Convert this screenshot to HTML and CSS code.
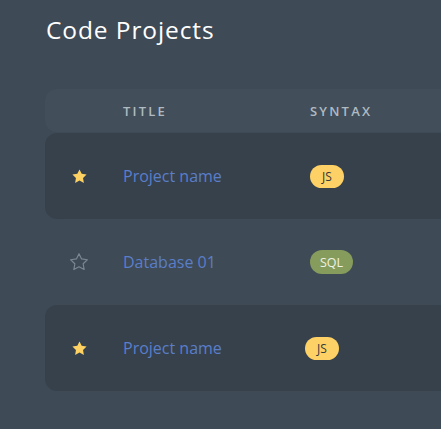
FILE: index.html
```html
<!DOCTYPE html>
<html>
<head>
<meta charset="utf-8">
<link rel="stylesheet" href="styles.css">
</head>
<body>
<div class="page">
  <h1 class="title">Code Projects</h1>
  <div class="table">
    <div class="row head">
      <div class="cell"></div>
      <div class="cell">TITLE</div>
      <div class="cell">SYNTAX</div>
    </div>
    <div class="row dark">
      <div class="cell star-cell">
        <svg class="star" viewBox="0 0 24 24"><path d="M12 2l3.09 6.26L22 9.27l-5 4.87 1.18 6.88L12 17.77l-6.18 3.25L7 14.14 2 9.27l6.91-1.01L12 2z"/></svg>
      </div>
      <div class="cell name">Project name</div>
      <div class="cell"><span class="badge js">JS</span></div>
    </div>
    <div class="row">
      <div class="cell star-cell">
        <svg class="star outline" viewBox="0 0 24 24"><path d="M12 2l3.09 6.26L22 9.27l-5 4.87 1.18 6.88L12 17.77l-6.18 3.25L7 14.14 2 9.27l6.91-1.01L12 2z"/></svg>
      </div>
      <div class="cell name">Database 01</div>
      <div class="cell"><span class="badge sql">SQL</span></div>
    </div>
    <div class="row dark">
      <div class="cell star-cell">
        <svg class="star" viewBox="0 0 24 24"><path d="M12 2l3.09 6.26L22 9.27l-5 4.87 1.18 6.88L12 17.77l-6.18 3.25L7 14.14 2 9.27l6.91-1.01L12 2z"/></svg>
      </div>
      <div class="cell name">Project name</div>
      <div class="cell"><span class="badge js shifted">JS</span></div>
    </div>
  </div>
</div>
</body>
</html>
```

FILE: styles.css
```css
html, body {
  margin: 0;
  padding: 0;
  overflow: hidden;
  background: #3e4a56;
}
body {
  font-family: "Open Sans", "Noto Sans", sans-serif;
}
.page {
  padding: 14px 0 0 45px;
  width: 396px;
}
.title {
  margin: 0;
  padding-left: 1px;
  font-size: 24.5px;
  line-height: 32px;
  font-weight: 500;
  color: #ffffff;
  letter-spacing: 0.9px;
}
.table {
  margin-top: 43px;
  display: flex;
  flex-direction: column;
}
.row {
  display: grid;
  grid-template-columns: 78px 187px 1fr;
  align-items: center;
  height: 86px;
  border-radius: 12px 0 0 12px;
}
.row.head {
  height: 43px;
  margin-bottom: 1px;
  background: #424f5a;
  color: #b0bac2;
  font-size: 13px;
  font-weight: 600;
  letter-spacing: 2.2px;
}
.row.dark {
  background: #36414c;
}
.star-cell {
  display: flex;
  align-items: center;
  padding-left: 27px;
}
.star {
  width: 17px;
  height: 17px;
  fill: #fdd163;
  margin-left: -1px;
}
.star.outline {
  width: 20px;
  height: 20px;
  margin-left: -3px;
  fill: none;
  stroke: #7c8792;
  stroke-width: 1.4;
  stroke-linejoin: round;
}
.name {
  color: #5a7ec9;
  font-size: 16px;
}
.badge {
  display: inline-flex;
  align-items: center;
  justify-content: center;
  height: 23px;
  border-radius: 12px;
  font-size: 12px;
  padding: 0 10px;
  margin-top: -1px;
}
.badge.js {
  background: #fdd165;
  color: #34383e;
  width: 14px;
}
.badge.sql {
  background: #869c5c;
  color: #eef2e6;
  width: 23px;
  font-size: 12.5px;
  height: 24px;
}
.badge.shifted {
  margin-left: -5px;
  margin-top: 1px;
}
```
